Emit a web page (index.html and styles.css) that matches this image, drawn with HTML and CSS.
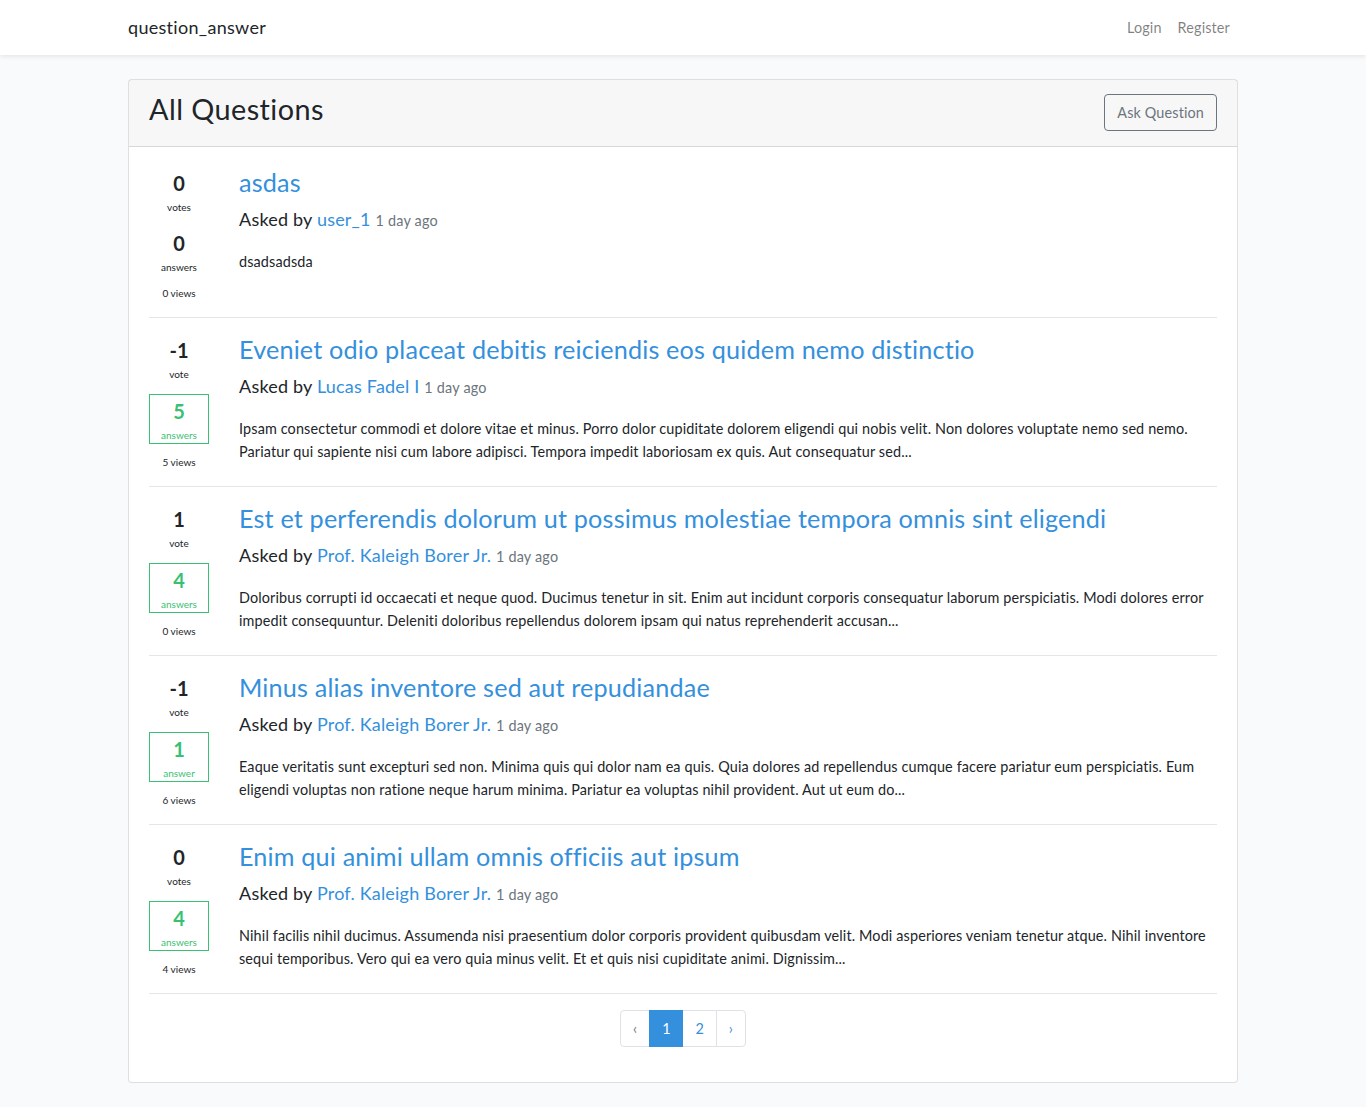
FILE: index.html
```html
<!DOCTYPE html>
<html lang="en">
<head>
<meta charset="utf-8">
<title>question_answer</title>
<link rel="stylesheet" href="styles.css">
</head>
<body>
<nav class="navbar">
  <div class="container nav-inner">
    <a class="brand" href="#">question_answer</a>
    <ul class="nav-links">
      <li><a href="#">Login</a></li>
      <li><a href="#">Register</a></li>
    </ul>
  </div>
</nav>
<main class="main">
  <div class="container">
    <div class="card">
      <div class="card-header">
        <h2>All Questions</h2>
        <a href="#" class="btn-outline">Ask Question</a>
      </div>
      <div class="card-body">
        <div class="media">
          <div class="counters">
            <div class="vote"><strong>0</strong>votes</div>
            <div class="status"><strong>0</strong>answers</div>
            <div class="view">0 views</div>
          </div>
          <div class="media-body">
            <h3><a href="#">asdas</a></h3>
            <p class="lead">Asked by <a href="#">user_1</a> <small class="muted">1 day ago</small></p>
            <div class="excerpt">dsadsadsda</div>
          </div>
        </div>
        <hr>
        <div class="media">
          <div class="counters">
            <div class="vote"><strong>-1</strong>vote</div>
            <div class="status answered"><strong>5</strong>answers</div>
            <div class="view">5 views</div>
          </div>
          <div class="media-body">
            <h3><a href="#">Eveniet odio placeat debitis reiciendis eos quidem nemo distinctio</a></h3>
            <p class="lead">Asked by <a href="#">Lucas Fadel I</a> <small class="muted">1 day ago</small></p>
            <div class="excerpt">Ipsam consectetur commodi et dolore vitae et minus. Porro dolor cupiditate dolorem eligendi qui nobis velit. Non dolores voluptate nemo sed nemo. Pariatur qui sapiente nisi cum labore adipisci. Tempora impedit laboriosam ex quis. Aut consequatur sed...</div>
          </div>
        </div>
        <hr>
        <div class="media">
          <div class="counters">
            <div class="vote"><strong>1</strong>vote</div>
            <div class="status answered"><strong>4</strong>answers</div>
            <div class="view">0 views</div>
          </div>
          <div class="media-body">
            <h3><a href="#">Est et perferendis dolorum ut possimus molestiae tempora omnis sint eligendi</a></h3>
            <p class="lead">Asked by <a href="#">Prof. Kaleigh Borer Jr.</a> <small class="muted">1 day ago</small></p>
            <div class="excerpt">Doloribus corrupti id occaecati et neque quod. Ducimus tenetur in sit. Enim aut incidunt corporis consequatur laborum perspiciatis. Modi dolores error impedit consequuntur. Deleniti doloribus repellendus dolorem ipsam qui natus reprehenderit accusan...</div>
          </div>
        </div>
        <hr>
        <div class="media">
          <div class="counters">
            <div class="vote"><strong>-1</strong>vote</div>
            <div class="status answered"><strong>1</strong>answer</div>
            <div class="view">6 views</div>
          </div>
          <div class="media-body">
            <h3><a href="#">Minus alias inventore sed aut repudiandae</a></h3>
            <p class="lead">Asked by <a href="#">Prof. Kaleigh Borer Jr.</a> <small class="muted">1 day ago</small></p>
            <div class="excerpt">Eaque veritatis sunt excepturi sed non. Minima quis qui dolor nam ea quis. Quia dolores ad repellendus cumque facere pariatur eum perspiciatis. Eum eligendi voluptas non ratione neque harum minima. Pariatur ea voluptas nihil provident. Aut ut eum do...</div>
          </div>
        </div>
        <hr>
        <div class="media">
          <div class="counters">
            <div class="vote"><strong>0</strong>votes</div>
            <div class="status answered"><strong>4</strong>answers</div>
            <div class="view">4 views</div>
          </div>
          <div class="media-body">
            <h3><a href="#">Enim qui animi ullam omnis officiis aut ipsum</a></h3>
            <p class="lead">Asked by <a href="#">Prof. Kaleigh Borer Jr.</a> <small class="muted">1 day ago</small></p>
            <div class="excerpt">Nihil facilis nihil ducimus. Assumenda nisi praesentium dolor corporis provident quibusdam velit. Modi asperiores veniam tenetur atque. Nihil inventore sequi temporibus. Vero qui ea vero quia minus velit. Et et quis nisi cupiditate animi. Dignissim...</div>
          </div>
        </div>
        <hr>
        <nav class="pager">
          <ul class="pagination">
            <li class="page disabled"><span>&lsaquo;</span></li>
            <li class="page active"><span>1</span></li>
            <li class="page"><a href="#">2</a></li>
            <li class="page"><a href="#">&rsaquo;</a></li>
          </ul>
        </nav>
      </div>
    </div>
  </div>
</main>
</body>
</html>
```

FILE: styles.css
```css
* { box-sizing: border-box; }
body {
  margin: 0;
  font-family: "Lato", "Noto Sans", sans-serif;
  font-size: 14.4px;
  line-height: 1.6;
  letter-spacing: 0.14px;
  color: #212529;
  background: #f8fafc;
}
a { color: #3490dc; text-decoration: none; }
.container {
  max-width: 1140px;
  margin: 0 auto;
  padding: 0 15px;
}
.navbar {
  background: #fff;
  box-shadow: 0 2px 4px rgba(0,0,0,0.075);
  padding: 8px 0;
}
.nav-inner {
  display: flex;
  align-items: center;
  justify-content: space-between;
}
.brand {
  color: #212529;
  font-size: 18px;
  padding: 4.6px 0;
  line-height: 1.6;
  letter-spacing: 0.3px;
}
.nav-links {
  list-style: none;
  margin: 0;
  padding: 0;
  display: flex;
}
.nav-links a {
  display: block;
  padding: 8px;
  color: rgba(0,0,0,0.5);
}
.main { padding: 24px 0; }
.card {
  background: #fff;
  border: 1px solid rgba(0,0,0,0.125);
  border-radius: 4px;
}
.card-header {
  display: flex;
  align-items: center;
  background: rgba(0,0,0,0.03);
  border-bottom: 1px solid rgba(0,0,0,0.125);
  padding: 12px 20px;
}
.card-header h2 {
  margin: 0 0 7px;
  font-size: 28.8px;
  font-weight: 400;
  line-height: 1.2;
  letter-spacing: 0.45px;
}
.btn-outline {
  margin-left: auto;
  color: #6c757d;
  border: 1px solid #6c757d;
  border-radius: 4px;
  padding: 6px 12px;
  line-height: 1.6;
}
.card-body { padding: 20px; }
.media { display: flex; align-items: flex-start; }
.counters {
  width: 60px;
  margin-right: 30px;
  font-size: 10px;
  text-align: center;
  flex-shrink: 0;
  letter-spacing: 0;
}
.counters strong { display: block; font-size: 20px; font-weight: 700; }
.vote, .status { width: 60px; }
.status { margin-top: 12px; }
.status.answered { border: 1px solid #38c172; color: #38c172; }
.view { margin-top: 10px; }
.media-body { flex: 1; min-width: 0; }
.media-body h3 {
  margin: 0 0 8px;
  font-size: 25.2px;
  font-weight: 400;
  line-height: 1.2;
  letter-spacing: 0.17px;
}
.lead {
  margin: 0 0 16px;
  font-size: 18px;
  font-weight: 400;
  letter-spacing: 0.2px;
}
.muted { color: #6c757d; font-size: 80%; font-weight: 400; }
hr {
  border: 0;
  border-top: 1px solid rgba(0,0,0,0.1);
  margin: 16px 0;
}
.pager { display: flex; justify-content: center; }
.pagination {
  display: flex;
  list-style: none;
  padding: 0;
  margin: 0 0 15px;
  letter-spacing: 0;
}
.page span, .page a {
  display: block;
  padding: 6px 12px;
  border: 1px solid #dee2e6;
  margin-left: -1px;
  line-height: 1.6;
  color: #3490dc;
  background: #fff;
}
.page:first-child span { border-radius: 4px 0 0 4px; margin-left: 0; }
.page:last-child a { border-radius: 0 4px 4px 0; }
.page.disabled span { color: #6c757d; }
.page.active span { background: #3490dc; border-color: #3490dc; color: #fff; position: relative; z-index: 1; }
```
